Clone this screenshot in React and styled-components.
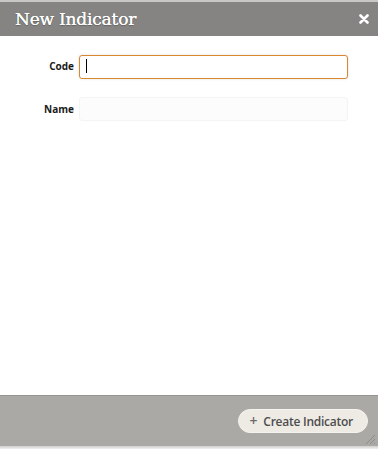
import { createGlobalStyle } from "styled-components";
import styled from "styled-components";

const GlobalStyle = createGlobalStyle`
  html, body {
    margin: 0;
    padding: 0;
    background: #ffffff;
  }
  #root {
    width: 378px;
    height: 449px;
  }
`;

const Dialog = styled.div`
  width: 378px;
  height: 449px;
  display: flex;
  flex-direction: column;
  background: #ffffff;
  box-sizing: border-box;
  border-top: 2px solid #c9c8c6;
  font-family: "Open Sans", "Liberation Sans", sans-serif;
`;

const Header = styled.div`
  height: 34px;
  background: #858482;
  display: flex;
  align-items: center;
  justify-content: space-between;
  padding: 0 8px 0 15px;
`;

const Title = styled.h1`
  margin: 0;
  font-family: "DejaVu Serif", "Liberation Serif", serif;
  font-size: 17px;
  font-weight: normal;
  color: #ffffff;
  letter-spacing: -0.2px;
  text-shadow: 0 0 0.4px #fff, 0 1px 1px rgba(0, 0, 0, 0.25);
`;

const Close = styled.button`
  border: none;
  background: none;
  padding: 0;
  width: 12px;
  height: 12px;
  display: flex;
  align-items: center;
  justify-content: center;
  cursor: pointer;
`;

const Body = styled.div`
  flex: 1;
  padding: 18px 30px 0 0;
  display: flex;
  flex-direction: column;
  gap: 18px;
`;

const Row = styled.div`
  display: grid;
  grid-template-columns: 74px 1fr;
  align-items: center;
  column-gap: 5px;
`;

const Label = styled.label`
  text-align: right;
  font-size: 10px;
  font-weight: 700;
  color: #1a1a1a;
`;

const Input = styled.input`
  box-sizing: border-box;
  height: 24px;
  width: 269px;
  border-radius: 3px;
  padding: 0 6px;
  font-size: 13px;
  outline: none;
  border: 1px solid ${(p) => (p.$focused ? "#d9882f" : "#f4f4f4")};
  background: ${(p) => (p.$focused ? "#ffffff" : "#fcfcfc")};
  box-shadow: ${(p) => (p.$focused ? "0 0 3px rgba(0,0,0,0.12)" : "none")};
`;

const Caret = styled.span`
  position: absolute;
  left: 7px;
  top: 5px;
  width: 1px;
  height: 14px;
  background: #000;
`;

const InputWrap = styled.div`
  position: relative;
  width: 269px;
`;

const Footer = styled.div`
  height: 50px;
  background: #aaa9a6;
  border-top: 1px solid #959491;
  display: flex;
  align-items: center;
  justify-content: flex-end;
  padding: 0 10px 0 0;
  position: relative;
`;

const Shadow = styled.div`
  height: 3px;
  background: linear-gradient(#cfcecc, #f0f0f0);
`;

const Button = styled.button`
  height: 24px;
  padding: 0 14px 0 11px;
  border-radius: 12px;
  border: 1px solid #f5f3ee;
  background: #eeebe5;
  font-family: "Open Sans", "Liberation Sans", sans-serif;
  font-size: 12px;
  font-weight: 600;
  letter-spacing: -0.25px;
  color: #4d4d4d;
  display: flex;
  align-items: center;
  gap: 6px;
  cursor: pointer;
`;

const Plus = styled.span`
  font-size: 14px;
  font-weight: 600;
  color: #6a6a6a;
  line-height: 1;
`;

const Grip = styled.svg`
  position: absolute;
  right: 2px;
  bottom: 1px;
`;

export default function App() {
  return (
    <>
      <GlobalStyle />
      <Dialog>
        <Header>
          <Title>New Indicator</Title>
          <Close aria-label="close">
            <svg width="10" height="10" viewBox="0 0 10 10">
              <path d="M1.5 1.5 L8.5 8.5 M8.5 1.5 L1.5 8.5" stroke="#fff" strokeWidth="2.6" strokeLinecap="round" />
            </svg>
          </Close>
        </Header>
        <Body>
          <Row>
            <Label>Code</Label>
            <InputWrap>
              <Input $focused />
              <Caret />
            </InputWrap>
          </Row>
          <Row>
            <Label>Name</Label>
            <InputWrap>
              <Input />
            </InputWrap>
          </Row>
        </Body>
        <Footer>
          <Button>
            <Plus>+</Plus>
            Create Indicator
          </Button>
          <Grip width="12" height="12" viewBox="0 0 12 12">
            <path d="M11 2 L2 11 M11 6 L6 11 M11 10 L10 11" stroke="#8c8b88" strokeWidth="1" />
          </Grip>
        </Footer>
        <Shadow />
      </Dialog>
    </>
  );
}
